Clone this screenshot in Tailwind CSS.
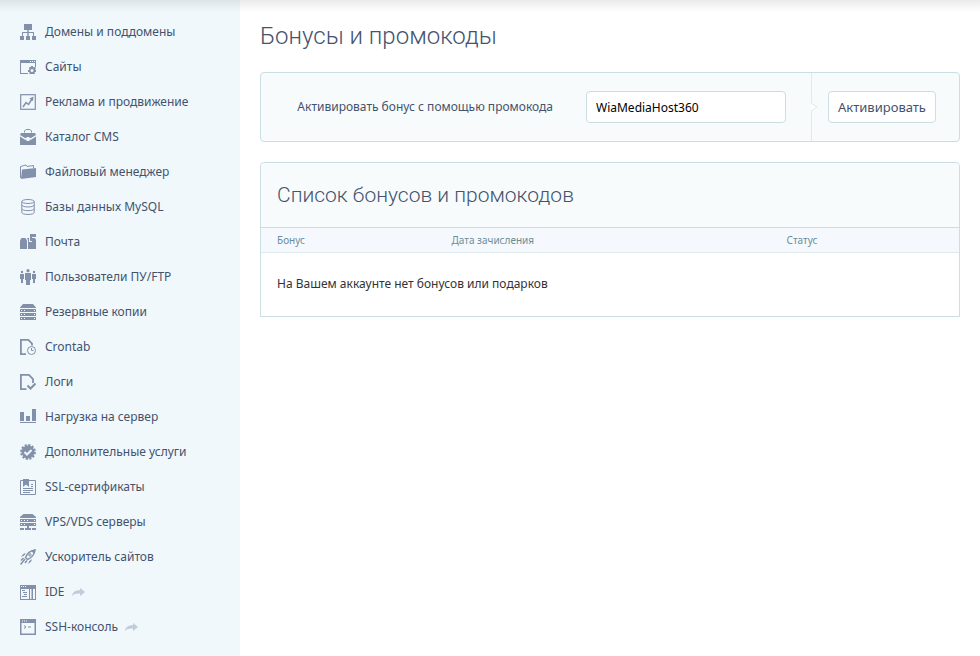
<!DOCTYPE html>
<html lang="ru">
<head>
    <meta charset="UTF-8">
    <meta name="viewport" content="width=device-width, initial-scale=1.0">
    <title>Бонусы и промокоды</title>
    <script src="https://cdn.jsdelivr.net/npm/@tailwindcss/browser@4"></script>
</head>
<body class="bg-white font-['Noto_Sans',sans-serif] text-xs leading-5 text-[#43536d]">

    <!-- Shadow of the top bar -->
    <div class="absolute inset-x-0 top-0 h-3 bg-linear-to-b from-black/8 to-transparent"></div>

    <div class="flex min-h-screen">

        <!-- Sidebar -->
        <nav class="w-60 shrink-0 bg-[#f0f8fc] pt-[14px] pl-5">
            <ul>
                <li>
                    <a href="#" class="flex h-[35px] items-center gap-[9px]">
                        <svg class="size-4 fill-[#8290a9]" viewBox="0 0 16 16"><path d="M4 0h8v6H8.700v2H14v4h2v4h-4v-4h1V9H8.700v3H10v4H6v-4h1.300V9H3v3h1v4H0v-4h2V8h5.300V6H4z"/></svg>
                        Домены и поддомены
                    </a>
                </li>
                <li>
                    <a href="#" class="flex h-[35px] items-center gap-[9px]">
                        <svg class="size-4 fill-[#8290a9]" viewBox="0 0 16 16"><path fill-rule="evenodd" d="M0 1h16v7h-1V4H1v10h7v1H0zM10 2v1h1V2zm2 0v1h1V2zm2 0v1h1V2z"/><path fill-rule="evenodd" d="M11 7h2v1l1 .5 1-.8 1 1.300-.8 1 .3 1h.5v2h-1l-.5 1 .6 1h-6l.6-1-.5-1H8v-2h1l.5-1-.6-1L10 7.700l1 .6zm1 3a1.500 1.500 0 1 0 0 3 1.500 1.500 0 0 0 0-3z"/></svg>
                        Сайты
                    </a>
                </li>
                <li>
                    <a href="#" class="flex h-[35px] items-center gap-[9px]">
                        <svg class="size-4 fill-none stroke-[#8290a9]" viewBox="0 0 16 16"><rect x=".7" y=".7" width="14.600" height="14.600" stroke-width="1.200"/><path d="M3 13l3-4.500 2.500 2L12 5" stroke-width="1.500"/><path d="M9.500 4.500L13.500 2.500 13 7z" fill="#8290a9" stroke="none"/></svg>
                        Реклама и продвижение
                    </a>
                </li>
                <li>
                    <a href="#" class="flex h-[35px] items-center gap-[9px]">
                        <svg class="size-4 fill-[#8290a9]" viewBox="0 0 16 16"><path d="M4.500 3.500V2L6 .5h4L11.500 2v1.500" fill="none" stroke="#8290a9"/><path d="M1 4h14l1 2-5 3H9.500V8h-3v1H5L0 6z"/><path d="M0 7.500l5 3.300h1.500V12h3v-1.200H11l5-3.300V16H0z"/></svg>
                        Каталог CMS
                    </a>
                </li>
                <li>
                    <a href="#" class="flex h-[35px] items-center gap-[9px]">
                        <svg class="size-4 fill-[#8290a9]" viewBox="0 0 16 16"><path d="M.5 14V2.500L6 1l1 1.500 6.500-1V4" fill="none" stroke="#8290a9"/><path d="M2 5.500L16 4v9L1 15z"/></svg>
                        Файловый менеджер
                    </a>
                </li>
                <li>
                    <a href="#" class="flex h-[35px] items-center gap-[9px]">
                        <svg class="size-4 fill-none stroke-[#8290a9]" viewBox="0 0 16 16"><ellipse cx="8" cy="2.500" rx="6.200" ry="2"/><path d="M1.800 2.500v11c0 2.600 12.400 2.600 12.400 0v-11M1.800 6c0 2.600 12.400 2.600 12.400 0M1.800 9.700c0 2.600 12.400 2.600 12.400 0"/></svg>
                        Базы данных MySQL
                    </a>
                </li>
                <li>
                    <a href="#" class="flex h-[35px] items-center gap-[9px]">
                        <svg class="size-4 fill-[#8290a9]" viewBox="0 0 16 16"><path d="M0 15V6.500L1.500 4h4L7 6.500V15z"/><path d="M8 15V6L7 4h2v4h3V4h3l1 2v9z"/><path d="M10 0h6v3h-4v4h-2z"/></svg>
                        Почта
                    </a>
                </li>
                <li>
                    <a href="#" class="flex h-[35px] items-center gap-[9px]">
                        <svg class="size-4 fill-[#8290a9]" viewBox="0 0 16 16"><circle cx="8" cy="1.700" r="1.600"/><circle cx="2" cy="3" r="1.200"/><circle cx="14" cy="3" r="1.200"/><path d="M5 4h6v7h-1v5H6v-5H5zM0 5h4v5H3v4H1v-4H0zM12 5h4v5h-1v4h-2v-4h-1z"/></svg>
                        Пользователи ПУ/FTP
                    </a>
                </li>
                <li>
                    <a href="#" class="flex h-[35px] items-center gap-[9px]">
                        <svg class="size-4 fill-[#8290a9]" viewBox="0 0 16 16"><path d="M3 0h10l3 3.500V4H0v-.5z"/><path fill-rule="evenodd" d="M0 5h16v3H0zm1 1v1h1V6zm3 0v1h1V6zm10 0v1h1V6zM0 9h16v3H0zm1 1v1h1v-1zm3 0v1h1v-1zm10 0v1h1v-1zM0 13h16v3H0zm1 1v1h1v-1zm3 0v1h1v-1zm10 0v1h1v-1z"/></svg>
                        Резервные копии
                    </a>
                </li>
                <li>
                    <a href="#" class="flex h-[35px] items-center gap-[9px]">
                        <svg class="size-4 fill-none stroke-[#8290a9]" viewBox="0 0 16 16"><path d="M6 15.200H.9V.9h7.500L12 4.500v2" stroke-width="1.800"/><circle cx="11.500" cy="11.500" r="4"/><path d="M11.500 9v2.500h2"/></svg>
                        Crontab
                    </a>
                </li>
                <li>
                    <a href="#" class="flex h-[35px] items-center gap-[9px]">
                        <svg class="size-4 fill-none stroke-[#8290a9]" viewBox="0 0 16 16"><path d="M6.500 15.100H.9V.9h8L13 5v4" stroke-width="1.800"/><path d="M7.500 11.500l3 3 5-5" stroke-width="2"/></svg>
                        Логи
                    </a>
                </li>
                <li>
                    <a href="#" class="flex h-[35px] items-center gap-[9px]">
                        <svg class="size-4 fill-[#8290a9]" viewBox="0 0 16 16"><path d="M0 3h4v9H0zM6 7h4v5H6zM12 0h4v12h-4zM0 13h16v1H0z"/></svg>
                        Нагрузка на сервер
                    </a>
                </li>
                <li>
                    <a href="#" class="flex h-[35px] items-center gap-[9px]">
                        <svg class="size-4" viewBox="0 0 16 16"><circle cx="8" cy="8" r="6.500" fill="#8290a9"/><circle cx="8" cy="8" r="6.900" fill="none" stroke="#8290a9" stroke-width="2" stroke-dasharray="2.200 1.412"/><path d="M4.500 8l2.500 2.500 4.500-4.500" fill="none" stroke="#f0f8fc" stroke-width="2"/></svg>
                        Дополнительные услуги
                    </a>
                </li>
                <li>
                    <a href="#" class="flex h-[35px] items-center gap-[9px]">
                        <svg class="size-4 fill-[#8290a9]" viewBox="0 0 16 16"><path d="M.5 1.500h15v14H.5z" fill="none" stroke="#8290a9"/><path d="M3 0h6v8L6 5.500 3 8zM11 5h2v1h-2zM11 7h2v1h-2zM3 9h10v1H3zM3 11h10v1H3zM3 13h7v1H3z"/></svg>
                        SSL-сертификаты
                    </a>
                </li>
                <li>
                    <a href="#" class="flex h-[35px] items-center gap-[9px]">
                        <svg class="size-4 fill-[#8290a9]" viewBox="0 0 16 16"><path d="M3.500 0h9L16 3v1H0V3z"/><path fill-rule="evenodd" d="M0 5h16v3H0zm1 1v1h1V6zm3 0v1h1V6zm3 0v1h1V6zm7 0v1h1V6zM0 9h16v3H0zm1 1v1h1v-1zm3 0v1h1v-1zm10 0v1h1v-1zM7 12h2v2h2v2H5v-2h2zM0 14h4v2H0zM12 14h4v2h-4z"/></svg>
                        VPS/VDS серверы
                    </a>
                </li>
                <li>
                    <a href="#" class="flex h-[35px] items-center gap-[9px]">
                        <svg class="size-4 fill-none stroke-[#8290a9]" viewBox="0 0 16 16"><path d="M5.500 8.500C7 4.500 10 1.800 15 1c-.6 5-3.500 8-7.500 9.500z" stroke-width="1.400"/><path d="M11 1.800L15.800.2 14.300 5z" fill="#8290a9" stroke="none"/><circle cx="10" cy="6" r="1.200"/><path d="M6 4.500H4L.8 7.700l2.700-.6zM11.500 10v2l-3.200 3.200.7-2.800z" fill="#8290a9" stroke="none"/><path d="M5 10l-4.500 5.500M3.500 9L1 11.500M7 11.500L5 14" stroke-width="1.500"/></svg>
                        Ускоритель сайтов
                    </a>
                </li>
                <li>
                    <a href="#" class="flex h-[35px] items-center gap-[9px]">
                        <svg class="size-4 fill-[#8290a9]" viewBox="0 0 16 16"><path fill-rule="evenodd" d="M0 1h16v15H0zm1 4v10h8V5zm9 0v10h1.500V5zm3 0v10h2V5zM1 2v1h1V2zm2 0v1h1V2zm2 0v1h1V2z"/><path d="M2 6h3v1H2zM3 8h4v1H3zM4 10h3v1H4zM2 12h5v1H2z"/></svg>
                        IDE
                        <svg class="ml-[-2px] h-2 w-[13px] fill-[#c0ccdc]" viewBox="0 0 13 8"><path d="M0 8c.6-4 3.500-5.700 8-5.700V0l5 4-5 4V5.600C4.500 5.400 2 6 0 8z"/></svg>
                    </a>
                </li>
                <li>
                    <a href="#" class="flex h-[35px] items-center gap-[9px]">
                        <svg class="size-4 fill-[#8290a9]" viewBox="0 0 16 16"><path fill-rule="evenodd" d="M0 0h16v16H0zm1.500 4v10.500h13V4zM2 1.500v1h1v-1zm2 0v1h1v-1zm2 0v1h1v-1z"/><path d="M4 6.500l2 1.500-2 1.500M8 8h3" fill="none" stroke="#8290a9"/></svg>
                        SSH-консоль
                        <svg class="ml-[-2px] h-2 w-[13px] fill-[#c0ccdc]" viewBox="0 0 13 8"><path d="M0 8c.6-4 3.500-5.700 8-5.700V0l5 4-5 4V5.600C4.500 5.400 2 6 0 8z"/></svg>
                    </a>
                </li>
            </ul>
        </nav>

        <!-- Content -->
        <main class="min-w-0 flex-1 px-5 pt-5">
            <h1 class="font-['Roboto',sans-serif] text-2xl font-light">Бонусы и промокоды</h1>

            <!-- Promo code form -->
            <form class="mt-5 flex h-[70px] rounded border border-[#cbdee4] bg-[#f7fbfc]">
                <div class="flex flex-1 items-center justify-end gap-[33px] pr-[25px]">
                    <label for="promo">Активировать бонус с помощью промокода</label>
                    <input id="promo" type="text" value="WiaMediaHost360" class="h-8 w-[200px] rounded border border-[#cbdee4] bg-white px-[9px] text-black">
                </div>
                <div class="relative flex items-center border-l border-[#dfeaee] pr-[23px] pl-4">
                    <svg class="absolute top-[29px] left-[-1px] h-[10px] w-[7px]" viewBox="0 0 7 10"><path d="M0 1L6 5 0 9" fill="#fff" stroke="#dfeaee"/></svg>
                    <button type="submit" class="h-8 w-[108px] rounded border border-[#cbdee4] bg-white text-[13px]">Активировать</button>
                </div>
            </form>

            <!-- Bonus list -->
            <section class="mt-5 rounded-t border border-[#cbdee4]">
                <h2 class="flex h-16 items-center rounded-t bg-[#f7fbfc] px-4 font-['Roboto',sans-serif] text-[21px] font-light">Список бонусов и промокодов</h2>
                <table class="w-full table-fixed border-collapse text-left">
                    <thead>
                        <tr class="h-[25px] border-t border-b border-t-[#cbdee4] border-b-[#dfeaee] bg-[#f5f9fd] text-[10px] leading-4 text-[#6b8d98]">
                            <th class="w-1/4 pl-4 font-normal">Бонус</th>
                            <th class="w-[48%] pl-4 font-normal">Дата зачисления</th>
                            <th class="pl-4 font-normal">Статус</th>
                        </tr>
                    </thead>
                    <tbody>
                        <tr class="h-[63px]">
                            <td colspan="3" class="px-4 text-[#333]">На Вашем аккаунте нет бонусов или подарков</td>
                        </tr>
                    </tbody>
                </table>
            </section>
        </main>
    </div>

</body>
</html>
